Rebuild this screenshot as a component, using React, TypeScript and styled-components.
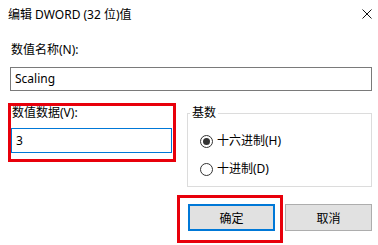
import React from "react"
import styled, { createGlobalStyle } from "styled-components"

const GlobalStyle = createGlobalStyle`
    html, body {
        margin: 0;
        padding: 0;
        background: #fff;
    }
    body {
        font-family: "Noto Sans", "Noto Sans CJK SC", sans-serif;
        font-size: 12px;
        color: #000;
    }
`

const Window = styled.div`
    width: 378px;
    height: 245px;
    background: #fff;
    overflow: hidden;
`

const TitleBar = styled.div`
    height: 30px;
    padding: 0 6px 0 8px;

    display: flex;
    align-items: center;
    justify-content: space-between;

    > span {
        line-height: 16px;
        margin-top: -1px;
    }
`

const CloseIcon = styled.svg`
    width: 10px;
    height: 10px;
    margin-top: -2px;
`

const Body = styled.div`
    padding: 0 6px 0 10px;
`

const Label = styled.div`
    line-height: 16px;
    margin-top: 12px;
    padding-left: 1px;
`

const TextBox = styled.div<{ $focused?: boolean; $width: number; $height: number }>`
    box-sizing: border-box;
    width: ${(p) => p.$width}px;
    height: ${(p) => p.$height}px;
    border: 1px solid ${(p) => (p.$focused ? "#0078d7" : "#7a7a7a")};
    background: #fff;
    line-height: 16px;

    display: flex;
    align-items: center;
    padding-left: 4px;
`

const NameBox = styled(TextBox)`
    margin-top: 9px;
`

const Row = styled.div`
    display: flex;
    align-items: flex-start;
    margin-top: 12px;
`

const Highlight = styled.div`
    box-sizing: border-box;
    border: 3px solid #e8000b;
`

const ValueArea = styled(Highlight)`
    width: 168px;
    margin-left: -2px;
    padding: 0 0 6px 0;

    > div:first-child {
        line-height: 14px;
        padding-left: 1px;
    }
`

const ValueBox = styled(TextBox)`
    margin-top: 8px;
`

const Group = styled.fieldset`
    box-sizing: border-box;
    width: 185px;
    margin: 2px 0 0 11px;
    padding: 0 0 9px 2px;
    border: 1px solid #dcdcdc;
    min-width: 0;

    > legend {
        padding: 0 2px;
        line-height: 16px;
    }
`

const Options = styled.div`
    display: flex;
    flex-direction: column;
    gap: 12px;
    padding: 12px 0 0 10px;
`

const Option = styled.label`
    display: flex;
    align-items: center;
    gap: 4px;
    line-height: 16px;
`

const RadioDot = styled.span<{ $checked?: boolean }>`
    box-sizing: border-box;
    width: 13px;
    height: 13px;
    border: 1px solid #333;
    border-radius: 50%;
    display: flex;
    align-items: center;
    justify-content: center;

    &::after {
        content: "";
        width: 7px;
        height: 7px;
        border-radius: 50%;
        background: ${(p) => (p.$checked ? "#333" : "transparent")};
    }
`

const Buttons = styled.div`
    display: flex;
    justify-content: flex-end;
    align-items: flex-start;
    gap: 2px;
    margin-top: 8px;
`

const OkArea = styled(Highlight)`
    padding: 6px 5px 9px 8px;
`

const Button = styled.button<{ $default?: boolean }>`
    box-sizing: border-box;
    width: 87px;
    height: 27px;
    margin-top: ${(p) => (p.$default ? 0 : 9)}px;
    border: ${(p) => (p.$default ? "2px solid #0078d7" : "1px solid #adadad")};
    background: #e1e1e1;
    font: inherit;
    color: #000;
    padding: 0;
`

export default function App() {
    return (
        <Window>
            <GlobalStyle />
            <TitleBar>
                <span>编辑 DWORD (32 位)值</span>
                <CloseIcon viewBox="0 0 10 10">
                    <path d="M0.5 0.5 L9.5 9.5 M9.5 0.5 L0.5 9.5" stroke="#111" strokeWidth="1" fill="none" />
                </CloseIcon>
            </TitleBar>
            <Body>
                <Label>数值名称(N):</Label>
                <NameBox $width={362} $height={24}>Scaling</NameBox>
                <Row>
                    <ValueArea>
                        <div>数值数据(V):</div>
                        <ValueBox $focused $width={161} $height={25}>3</ValueBox>
                    </ValueArea>
                    <Group>
                        <legend>基数</legend>
                        <Options>
                            <Option>
                                <RadioDot $checked />
                                十六进制(H)
                            </Option>
                            <Option>
                                <RadioDot />
                                十进制(D)
                            </Option>
                        </Options>
                    </Group>
                </Row>
                <Buttons>
                    <OkArea>
                        <Button $default>确定</Button>
                    </OkArea>
                    <Button>取消</Button>
                </Buttons>
            </Body>
        </Window>
    )
}
